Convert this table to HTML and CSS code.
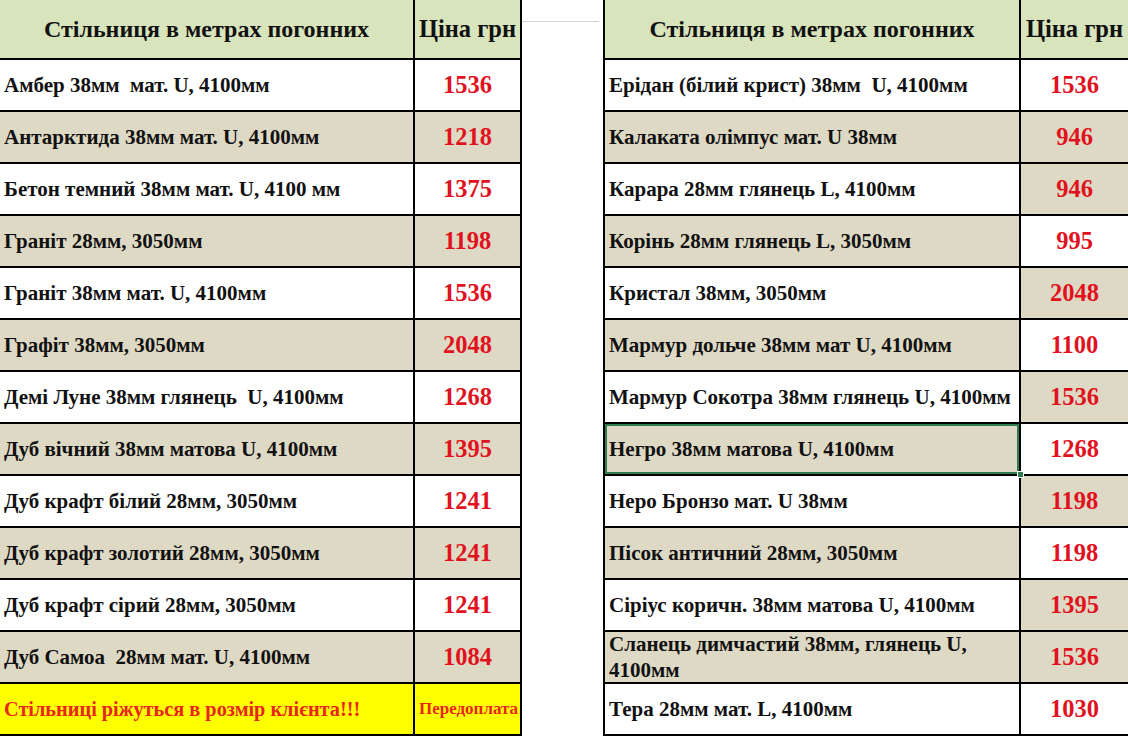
FILE: index.html
```html
<!DOCTYPE html>
<html lang="uk">
<head>
<meta charset="utf-8">
<title>Стільниця в метрах погонних</title>
<link rel="stylesheet" href="styles.css">
</head>
<body>
<div class="sheet">
  <div class="table left">
    <div class="cell head name">Стільниця в метрах погонних</div>
    <div class="cell head price">Ціна грн</div>

    <div class="cell name">Амбер 38мм&nbsp; мат. U, 4100мм</div><div class="cell price">1536</div>
    <div class="cell name beige">Антарктида 38мм мат. U, 4100мм</div><div class="cell price beige">1218</div>
    <div class="cell name">Бетон темний 38мм мат. U, 4100 мм</div><div class="cell price">1375</div>
    <div class="cell name beige">Граніт 28мм, 3050мм</div><div class="cell price beige">1198</div>
    <div class="cell name">Граніт 38мм мат. U, 4100мм</div><div class="cell price">1536</div>
    <div class="cell name beige">Графіт 38мм, 3050мм</div><div class="cell price beige">2048</div>
    <div class="cell name">Демі Луне 38мм глянець&nbsp; U, 4100мм</div><div class="cell price">1268</div>
    <div class="cell name beige">Дуб вічний 38мм матова U, 4100мм</div><div class="cell price beige">1395</div>
    <div class="cell name">Дуб крафт білий 28мм, 3050мм</div><div class="cell price">1241</div>
    <div class="cell name beige">Дуб крафт золотий 28мм, 3050мм</div><div class="cell price beige">1241</div>
    <div class="cell name">Дуб крафт сірий 28мм, 3050мм</div><div class="cell price">1241</div>
    <div class="cell name beige">Дуб Самоа&nbsp; 28мм мат. U, 4100мм</div><div class="cell price beige">1084</div>
    <div class="cell name yellow note">Стільниці ріжуться в розмір клієнта!!!</div><div class="cell price yellow prepay">Передоплата</div>
  </div>

  <div class="gap"><div class="gridline"></div></div>

  <div class="table right">
    <div class="cell head name">Стільниця в метрах погонних</div>
    <div class="cell head price">Ціна грн</div>

    <div class="cell name">Ерідан (білий крист) 38мм&nbsp; U, 4100мм</div><div class="cell price">1536</div>
    <div class="cell name beige">Калаката олімпус мат. U 38мм</div><div class="cell price beige">946</div>
    <div class="cell name">Карара 28мм глянець L, 4100мм</div><div class="cell price beige">946</div>
    <div class="cell name beige">Корінь 28мм глянець L, 3050мм</div><div class="cell price">995</div>
    <div class="cell name">Кристал 38мм, 3050мм</div><div class="cell price beige">2048</div>
    <div class="cell name beige">Мармур дольче 38мм мат U, 4100мм</div><div class="cell price">1100</div>
    <div class="cell name">Мармур Сокотра 38мм глянець U, 4100мм</div><div class="cell price beige">1536</div>
    <div class="cell name beige selected">Негро 38мм матова U, 4100мм<span class="handle"></span></div><div class="cell price">1268</div>
    <div class="cell name">Неро Бронзо мат. U 38мм</div><div class="cell price beige">1198</div>
    <div class="cell name beige">Пісок античний 28мм, 3050мм</div><div class="cell price">1198</div>
    <div class="cell name">Сіріус коричн. 38мм матова U, 4100мм</div><div class="cell price beige">1395</div>
    <div class="cell name beige wrap">Сланець димчастий 38мм, глянець U, 4100мм</div><div class="cell price beige">1536</div>
    <div class="cell name">Тера 28мм мат. L, 4100мм</div><div class="cell price">1030</div>
  </div>
</div>
</body>
</html>
```
FILE: styles.css
```css
html, body {
  margin: 0;
  padding: 0;
  background: #ffffff;
}
body {
  width: 1128px;
  height: 736px;
  overflow: hidden;
  font-family: "Liberation Serif", "Times New Roman", serif;
  font-weight: bold;
  color: #111111;
}
.sheet {
  display: flex;
  align-items: flex-start;
  width: 1128px;
  height: 736px;
}
.table {
  display: grid;
  grid-template-rows: 60px repeat(13, 52px);
  flex: none;
}
.left {
  grid-template-columns: 415px 107px;
  width: 522px;
}
.right {
  grid-template-columns: 418px 107px;
  width: 525px;
}
.gap {
  width: 81px;
  height: 736px;
  flex: none;
  position: relative;
}
.gridline {
  height: 21px;
  border-bottom: 1px solid #d4d4d4;
  margin-right: 4px;
}
.cell {
  box-sizing: border-box;
  border-bottom: 2px solid #000000;
  border-right: 2px solid #000000;
  display: flex;
  align-items: center;
  background: #ffffff;
  position: relative;
  white-space: nowrap;
}
.right .name {
  border-left: 2px solid #000000;
}
.right .price {
  border-right: none;
}
.name {
  padding-left: 4px;
  font-size: 21px;
}
.price {
  justify-content: center;
  color: #e1121e;
  font-size: 24.5px;
}
.head {
  background: #d8e4bc;
  color: #111111;
  font-size: 24px;
}
.head.name {
  justify-content: center;
  padding-left: 0;
}
.head.price {
  color: #111111;
  font-size: 24.5px;
}
.beige {
  background: #ddd9c4;
}
.yellow {
  background: #ffff00;
}
.note {
  color: #e8261a;
  font-size: 20.3px;
}
.prepay {
  color: #e8261a;
  font-size: 17px;
  padding-left: 2px;
}
.wrap {
  white-space: normal;
  line-height: 26px;
  padding-right: 20px;
}
.selected {
  box-shadow: inset 0 0 0 2px #2e7d4f;
}
.handle {
  position: absolute;
  right: -5px;
  bottom: -4px;
  width: 5px;
  height: 5px;
  background: #2e7d4f;
  border: 1px solid #ffffff;
  z-index: 2;
}
```
